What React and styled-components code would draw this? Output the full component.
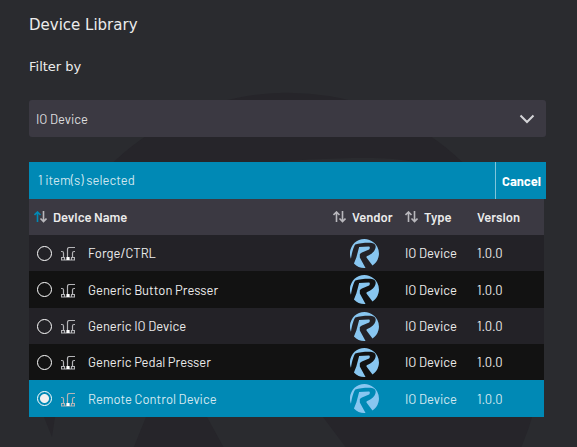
import React, { useState } from "react";
import styled, { createGlobalStyle, css } from "styled-components";

const GlobalStyle = createGlobalStyle`
  *, *::before, *::after { box-sizing: border-box; }
  body {
    margin: 0;
    background: #2a2b2f;
    color: #ececec;
    font: 13px/20px Barlow, Roboto, sans-serif;
  }
`;

const Page = styled.main`
  position: relative;
  overflow: hidden;
  min-height: 100vh;
  padding: 13px 31px 30px 29px;
`;

const Watermark = styled.svg`
  position: absolute;
  z-index: -1;
  top: 92px;
  left: 50%;
  width: 508px;
  height: 508px;
  margin-left: -254px;
  color: #26252a;
`;

const Title = styled.h1`
  margin: 0;
  font: 400 15px/24px "DejaVu Sans", sans-serif;
`;

const FilterLabel = styled.label`
  display: block;
  margin-top: 20px;
  font: 400 13px/20px "DejaVu Sans", sans-serif;
`;

const SelectBox = styled.div`
  display: grid;
  align-items: center;
  margin-top: 23px;
  border-radius: 3px;
  background: #3b3942;
  > * { grid-area: 1 / 1; }
  > svg { justify-self: end; margin-right: 11px; pointer-events: none; }
`;

const Select = styled.select`
  width: 100%;
  height: 37px;
  padding: 0 32px 0 7px;
  appearance: none;
  border: 0;
  border-radius: 3px;
  background: transparent;
  color: #dcdcde;
  font: inherit;
`;

const SelectionBar = styled.div`
  display: flex;
  align-items: stretch;
  justify-content: space-between;
  height: 37px;
  margin-top: 25px;
  padding-left: 9px;
  background: #0089b5;
  color: #cfe6ef;
  line-height: 37px;
`;

const CancelButton = styled.button`
  padding: 0 5px 0 6px;
  border: 0;
  border-left: 1px solid #80c4da;
  background: transparent;
  color: #fff;
  font: 700 13px/20px Barlow, Roboto, sans-serif;
`;

const Table = styled.table`
  width: calc(100% - 2px);
  table-layout: fixed;
  border-collapse: collapse;
`;

const Column = styled.col`
  width: ${({ $width }) => $width};
`;

const HeadCell = styled.th`
  height: 36px;
  padding: 0 0 0 ${({ $inset }) => $inset || "0"};
  background: #3b3942;
  font-weight: 600;
  text-align: left;
`;

const SortButton = styled.button`
  display: flex;
  align-items: center;
  gap: 6px;
  padding: 0;
  border: 0;
  background: transparent;
  color: inherit;
  font: inherit;
`;

const Row = styled.tr`
  height: 36px;
  background: #232227;
  &:nth-child(even) { background: #121212; }
  &:nth-child(3n + 2) { height: 37px; }
  ${({ $selected }) => $selected && css`
    && { background: #0089b5; color: #d3e8f0; }
  `}
`;

const Cell = styled.td`
  padding: 0;
  vertical-align: middle;
  > svg { display: block; }
`;

const DeviceLabel = styled.label`
  display: flex;
  align-items: center;
  padding-left: 8px;
  > svg { margin: 2px 13px 0 9px; }
`;

const Radio = styled.input`
  width: 15px;
  height: 15px;
  margin: 0;
  appearance: none;
  border: 1px solid #fff;
  border-radius: 50%;
  &:checked { background: radial-gradient(circle, #f0f0f0 4px, transparent 5px); }
`;

const VendorMark = styled.svg`
  width: 29px;
  height: 29px;
  margin-left: 17px;
  color: #88c6f0;
`;

const LOGO_PATH =
  "M9 325A254 254 0 1 1 394 466L288 325L292 300C370 275 440 220 450 140C452 90 410 66 331 66C240 66 150 78 92 98C72 120 34 230 17 345Z" +
  "M160 142L325 130C358 130 352 172 325 190C290 212 215 220 172 262L172 325L272 507A254 254 0 0 1 69 429L111 325Z";

function VendorShape() {
  return <path fill="currentColor" d={LOGO_PATH} />;
}

function SortArrows({ active }) {
  return (
    <svg width="13" height="12" viewBox="0 0 13 12" fill="none" strokeWidth="1.6" aria-hidden="true">
      <path stroke={active ? "#0089b5" : "#b9b8bd"} d="M3.5 11V1M.5 4L3.5 1L6.5 4" />
      <path stroke="#b9b8bd" d="M9.5 0V10.500M6.500 7.500L9.500 10.500L12.500 7.500" />
    </svg>
  );
}

function DeviceIcon() {
  return (
    <svg width="14" height="14" viewBox="0 0 14 14" fill="none" stroke="#b4b4b7" strokeWidth="1.2" aria-hidden="true">
      <path d="M0 4.5h1q1.500 0 1.500 1.500v4M6.500 10V2.500q0-2 2-2H14M14 4.500h-1q-1.500 0-1.500 1.500v4M.500 10.500h3v2.500h-3zM10.500 10.500h3v2.500h-3zM3.500 13h7" />
      <path fill="#fff" stroke="#fff" d="M6 10.500h2v2H6z" />
    </svg>
  );
}

const DEVICES = ["Forge/CTRL", "Generic Button Presser", "Generic IO Device", "Generic Pedal Presser", "Remote Control Device"];

export default function App() {
  const [selected, setSelected] = useState("Remote Control Device");
  return (
    <Page>
      <GlobalStyle />
      <Watermark viewBox="0 0 508 508" aria-hidden="true"><VendorShape /></Watermark>
      <Title>Device Library</Title>
      <FilterLabel htmlFor="filter">Filter by</FilterLabel>
      <SelectBox>
        <Select id="filter"><option>IO Device</option></Select>
        <svg width="16" height="10" viewBox="0 0 16 10" fill="none" stroke="#d5d5d8" strokeWidth="2" aria-hidden="true">
          <path d="M1.5 1.5L8 8L14.5 1.5" />
        </svg>
      </SelectBox>
      <SelectionBar>
        <span>{selected ? 1 : 0} item(s) selected</span>
        <CancelButton type="button" onClick={() => setSelected(null)}>Cancel</CancelButton>
      </SelectionBar>
      <Table>
        <colgroup>
          <Column />
          <Column $width="72px" />
          <Column $width="72px" />
          <Column $width="67px" />
        </colgroup>
        <thead>
          <tr>
            <HeadCell $inset="5px"><SortButton type="button"><SortArrows active />Device Name</SortButton></HeadCell>
            <HeadCell><SortButton type="button"><SortArrows />Vendor</SortButton></HeadCell>
            <HeadCell><SortButton type="button"><SortArrows />Type</SortButton></HeadCell>
            <HeadCell>Version</HeadCell>
          </tr>
        </thead>
        <tbody>
          {DEVICES.map((name) => (
            <Row key={name} $selected={name === selected}>
              <Cell>
                <DeviceLabel>
                  <Radio type="radio" name="device" checked={name === selected} onChange={() => setSelected(name)} />
                  <DeviceIcon />
                  {name}
                </DeviceLabel>
              </Cell>
              <Cell><VendorMark viewBox="0 0 508 508" aria-hidden="true"><VendorShape /></VendorMark></Cell>
              <Cell>IO Device</Cell>
              <Cell>1.0.0</Cell>
            </Row>
          ))}
        </tbody>
      </Table>
    </Page>
  );
}
